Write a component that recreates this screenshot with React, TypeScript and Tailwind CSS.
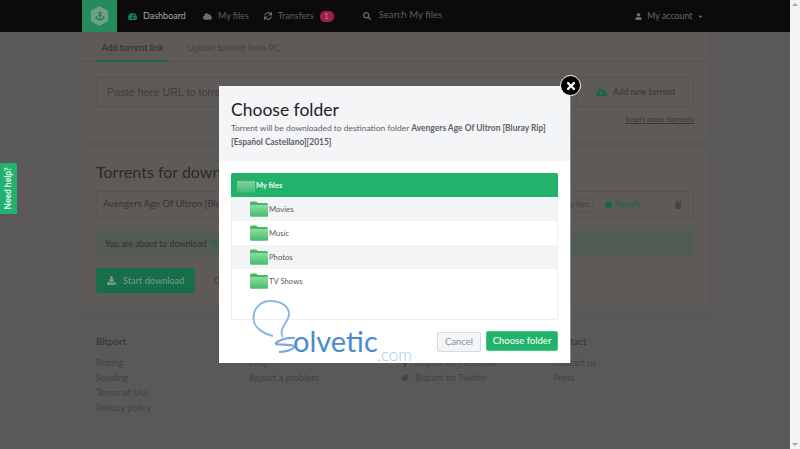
import { FaAnchor, FaCloud, FaSync, FaSearch, FaUser, FaCaretDown, FaCloudUploadAlt, FaTrash, FaDownload, FaTwitter, FaFacebookF, FaTachometerAlt, FaTimes } from "react-icons/fa";

function Folder({ dim = false }: { dim?: boolean }) {
  const id = dim ? "fa" : "fb";
  return (
    <svg width="18" height="16" viewBox="0 0 18 16" className="shrink-0">
      <defs>
        <linearGradient id={id} x1="0" y1="0" x2="0" y2="1">
          <stop offset="0" stopColor={dim ? "#7ed39c" : "#8be0a2"} />
          <stop offset="1" stopColor={dim ? "#45bb76" : "#48bb6b"} />
        </linearGradient>
      </defs>
      <path d="M0 2 Q0 0.5 1.5 0.5 H6 L8 2 H16.5 Q18 2 18 3.5 V14.5 Q18 15.5 17 15.5 H1 Q0 15.5 0 14.5 Z" fill={dim ? "#3aa86a" : "#4cb56c"} />
      <path d="M0 4 H18 V14.5 Q18 15.5 17 15.5 H1 Q0 15.5 0 14.5 Z" fill={`url(#${id})`} />
    </svg>
  );
}

function FooterCol({ title, links, className }: { title: string; links: React.ReactNode[]; className: string }) {
  return (
    <div className={className}>
      <div className="h-[15px] text-[9.5px] leading-[15px] font-bold text-[#3b3a3a]">{title}</div>
      <div className="mt-[6px] flex flex-col text-[9.2px] leading-[15px] text-[#444343]">
        {links.map((l, i) => <div key={i} className="flex items-center h-[15px]">{l}</div>)}
      </div>
    </div>
  );
}

function TreeRow({ label, alt }: { label: string; alt?: boolean }) {
  return (
    <div className={`h-6 flex items-center pl-[18px] gap-[1px] ${alt ? "bg-[#f3f4f6]" : "bg-white"}`}>
      <Folder />
      <span className="pt-[2px] text-[7.7px] text-[#555a60]">{label}</span>
    </div>
  );
}

export default function App() {
  return (
    <div className="relative h-[449px] w-[800px] overflow-hidden flex bg-[#5a5858] font-['Lato','Liberation_Sans',sans-serif]">
      <div className="w-[790px] h-full flex flex-col">
        <header className="h-8 bg-[#0c0a0a] flex items-center pl-[82px] shrink-0">
          <div className="w-[35px] h-8 bg-[#268a5f] flex items-center justify-center">
            <div className="w-[20px] h-[20px] bg-[#6f9e8a] flex items-center justify-center [clip-path:polygon(50%_0,93%_25%,93%_75%,50%_100%,7%_75%,7%_25%)]">
              <FaAnchor className="text-[#1b7d53] text-[10px]" />
            </div>
          </div>
          <FaTachometerAlt className="ml-[11px] text-[#1f8558] text-[9px]" />
          <span className="ml-[6px] text-[9px] text-[#a8a8a8]">Dashboard</span>
          <FaCloud className="ml-[17px] text-[#6e6e6e] text-[9px]" />
          <span className="ml-[6px] text-[9px] text-[#5e5e5e]">My files</span>
          <FaSync className="ml-[15px] text-[#6e6e6e] text-[8px]" />
          <span className="ml-[6px] text-[9px] text-[#5e5e5e]">Transfers</span>
          <span className="ml-[6px] w-[14px] h-[11px] rounded-[5px] bg-[#a01f45] text-[#b88] text-[8px] leading-[11px] text-center">1</span>
          <FaSearch className="ml-[29px] text-[#6e6e6e] text-[8px]" />
          <span className="ml-[8px] -mt-[2px] text-[9.6px] text-[#5e5e5e]">Search My files</span>
          <FaUser className="ml-[193px] text-[#6e6e6e] text-[7px]" />
          <span className="ml-[5px] text-[8.8px] text-[#6a6a6a]">My account</span>
          <FaCaretDown className="ml-[5px] text-[#6e6e6e] text-[7px]" />
        </header>

        <main className="ml-[82px] w-[626px] flex-1 flex flex-col">
          <section className="h-[108px] bg-[#5e5a58] flex flex-col">
            <div className="h-[30px] border-b border-[#555251] px-[14px] flex shrink-0">
              <div className="w-[73px] h-[30px] border-b-2 border-[#136a45] flex items-center justify-center text-[9px] text-[#2d2c2c] pt-[3px]">Add torrent link</div>
              <div className="ml-[18px] flex items-center text-[9px] text-[#454443] pt-[3px]">Upload torrent from PC</div>
            </div>
            <div className="mx-[14px] mt-[15px] h-[30px] flex border border-[#565352] rounded-[2px] shrink-0">
              <div className="flex-1 flex items-center pl-[10px] text-[10.8px] text-[#3f3e3e] font-['Liberation_Sans',sans-serif] whitespace-nowrap overflow-hidden">Paste here URL to torrent</div>
              <div className="w-[117px] border-l border-[#565352] flex items-center pl-[19px] gap-[6px]">
                <FaCloudUploadAlt className="text-[#136a45] text-[11px]" />
                <span className="text-[8.5px] font-bold text-[#3f3e3e]">Add new torrent</span>
              </div>
            </div>
            <div className="mx-[14px] mt-[7px] text-right text-[7.8px] underline text-[#3a3939]">Insert more torrents</div>
          </section>

          <section className="mt-2 h-[157px] bg-[#5e5a58] px-[14px] flex flex-col shrink-0">
            <h2 className="mt-[14px] h-[20px] text-[16px] leading-[20px] text-[#2a2a2a] whitespace-nowrap">Torrents for download</h2>
            <div className="mt-[9px] h-[27px] border border-[#565352] rounded-[2px] flex items-center pl-[6px] pr-[11px]">
              <span className="text-[9.5px] text-[#333232] whitespace-nowrap">Avengers Age Of Ultron [Bluray Rip]</span>
              <span className="ml-auto h-[14px] px-[3px] border border-[#565352] rounded-[2px] text-[7.5px] leading-[12px] text-[#3f3e3e]">My files</span>
              <span className="ml-[12px] w-[7px] h-[7px] rounded-full bg-[#136a45]" />
              <span className="ml-[3px] text-[9.5px] text-[#136a45]">Ready</span>
              <FaTrash className="ml-[33px] text-[#454443] text-[8px]" />
            </div>
            <div className="mt-[13px] h-[26px] bg-[#535c53] flex items-center pl-[9px] text-[8.6px] text-[#2f2f2e] whitespace-nowrap">
              You are about to download <span className="ml-[3px] text-[#136a45]">702 MB</span>
            </div>
            <div className="mt-[11px] flex items-center">
              <div className="w-[99px] h-[25px] bg-[#176f4a] rounded-[2px] flex items-center pl-[11px] gap-[7px]">
                <FaDownload className="text-[#7a9a8a] text-[9px]" />
                <span className="text-[9.2px] text-[#7a9a8a]">Start download</span>
              </div>
              <span className="ml-[19px] text-[10px] text-[#3f3e3e]">Cancel</span>
            </div>
          </section>

          <div className="h-[13px] border-b border-[#575555] shrink-0" />

          <footer className="flex px-[14px] pt-[16px]">
            <FooterCol className="w-[153px]" title="Bitport" links={["Pricing", "Seeding", "Terms of Use", "Privacy policy"]} />
            <FooterCol className="w-[152px]" title="" links={["FAQ", "Report a problem"]} />
            <FooterCol className="w-[152px]" title="" links={[
              <><FaFacebookF className="w-[8px] text-[8px] mr-[6px]" />Bitport on Facebook</>,
              <><FaTwitter className="w-[8px] text-[8px] mr-[6px]" />Bitport on Twitter</>,
            ]} />
            <FooterCol className="flex-1" title="Contact" links={["Contact us", "Press"]} />
          </footer>
        </main>
      </div>

      <aside className="w-[10px] h-full bg-[#f4f4f4] flex flex-col items-center justify-between py-[3px] shrink-0">
        <div className="w-0 h-0 border-x-[3px] border-x-transparent border-b-[3px] border-b-[#a8a8a8]" />
        <div className="w-0 h-0 border-x-[3px] border-x-transparent border-t-[3px] border-t-[#a8a8a8]" />
      </aside>

      <div className="absolute left-0 top-[163px] w-[17px] h-[51px] bg-[#22b26e] rounded-r-[1px] flex items-center justify-center">
        <span className="-rotate-90 whitespace-nowrap text-[8.5px] font-bold text-[#e8f6ee]">Need help?</span>
      </div>

      <div className="absolute left-[219px] top-[86px] w-[352px] h-[277px] bg-white border-r-[1px] border-[#8c8c8c] flex flex-col">
        <div className="h-[75px] bg-[#f4f5f7] px-3 shrink-0">
          <h1 className="pt-[12px] text-[17.5px] leading-[23px] text-[#1e2227]">Choose folder</h1>
          <p className="text-[8.45px] leading-[14px] text-[#5c6168]">
            Torrent will be downloaded to destination folder <span className="font-bold">Avengers Age Of Ultron [Bluray Rip] [Español Castellano][2015]</span>
          </p>
        </div>
        <div className="mx-3 mt-3 h-[147px] border border-[#eceef0] border-t-0 rounded-b-[2px] shrink-0 flex flex-col">
          <div className="-mx-px h-6 bg-[#21b36c] rounded-t-[2px] flex items-center pl-[6px] gap-[1px]">
            <Folder dim />
            <span className="pt-[2px] text-[7.5px] font-bold text-[#f2fbf6]">My files</span>
          </div>
          <TreeRow label="Movies" alt />
          <TreeRow label="Music" />
          <TreeRow label="Photos" alt />
          <TreeRow label="TV Shows" />
        </div>
        <div className="mx-3 mt-[11px] flex justify-end gap-[5px] items-start">
          <div className="mt-[1px] w-[44px] h-5 border border-[#d6dbe2] rounded-[2px] bg-[#f4f5f7] flex items-center justify-center text-[9.5px] text-[#8b9199]">Cancel</div>
          <div className="w-[72px] h-5 rounded-[2px] bg-[#21b36c] border border-[#3ecb85] flex items-center justify-center text-[9.5px] font-medium text-[#f2fbf6]">Choose folder</div>
        </div>
      </div>

      <div className="absolute left-[560px] top-[75px] w-[21px] h-[21px] rounded-full bg-black border-[1.5px] border-white flex items-center justify-center">
        <FaTimes className="text-white text-[12px]" />
      </div>

      <div className="absolute left-[252px] top-[298px] w-[165px] h-[68px] pointer-events-none">
        <svg width="50" height="58" viewBox="0 0 50 58" className="absolute left-0 top-0">
          <path d="M21 38 C12 36 2 30 1.5 21 C1 10 9 3 18 3 C28 2.5 37 8 37 16 C37 23 30 27 29.5 34 C29.5 36 30 38 31 39" fill="none" stroke="#8cb8e0" strokeWidth="2" />
          <path d="M43 40 C36 39 27 42 24 45 C22 48 42 45 42 49 C41 52 32 54 27 54" fill="none" stroke="#7aaadb" strokeWidth="2.2" />
        </svg>
        <span className="absolute left-[41px] top-[25px] text-[29px] leading-[36px] text-[#4a8ccb] font-['Lato',sans-serif]">olvetic</span>
        <span className="absolute left-[125px] top-[48px] text-[17px] leading-[18px] font-light text-[#a9cbea] font-['Lato',sans-serif]">.com</span>
      </div>
    </div>
  );
}
